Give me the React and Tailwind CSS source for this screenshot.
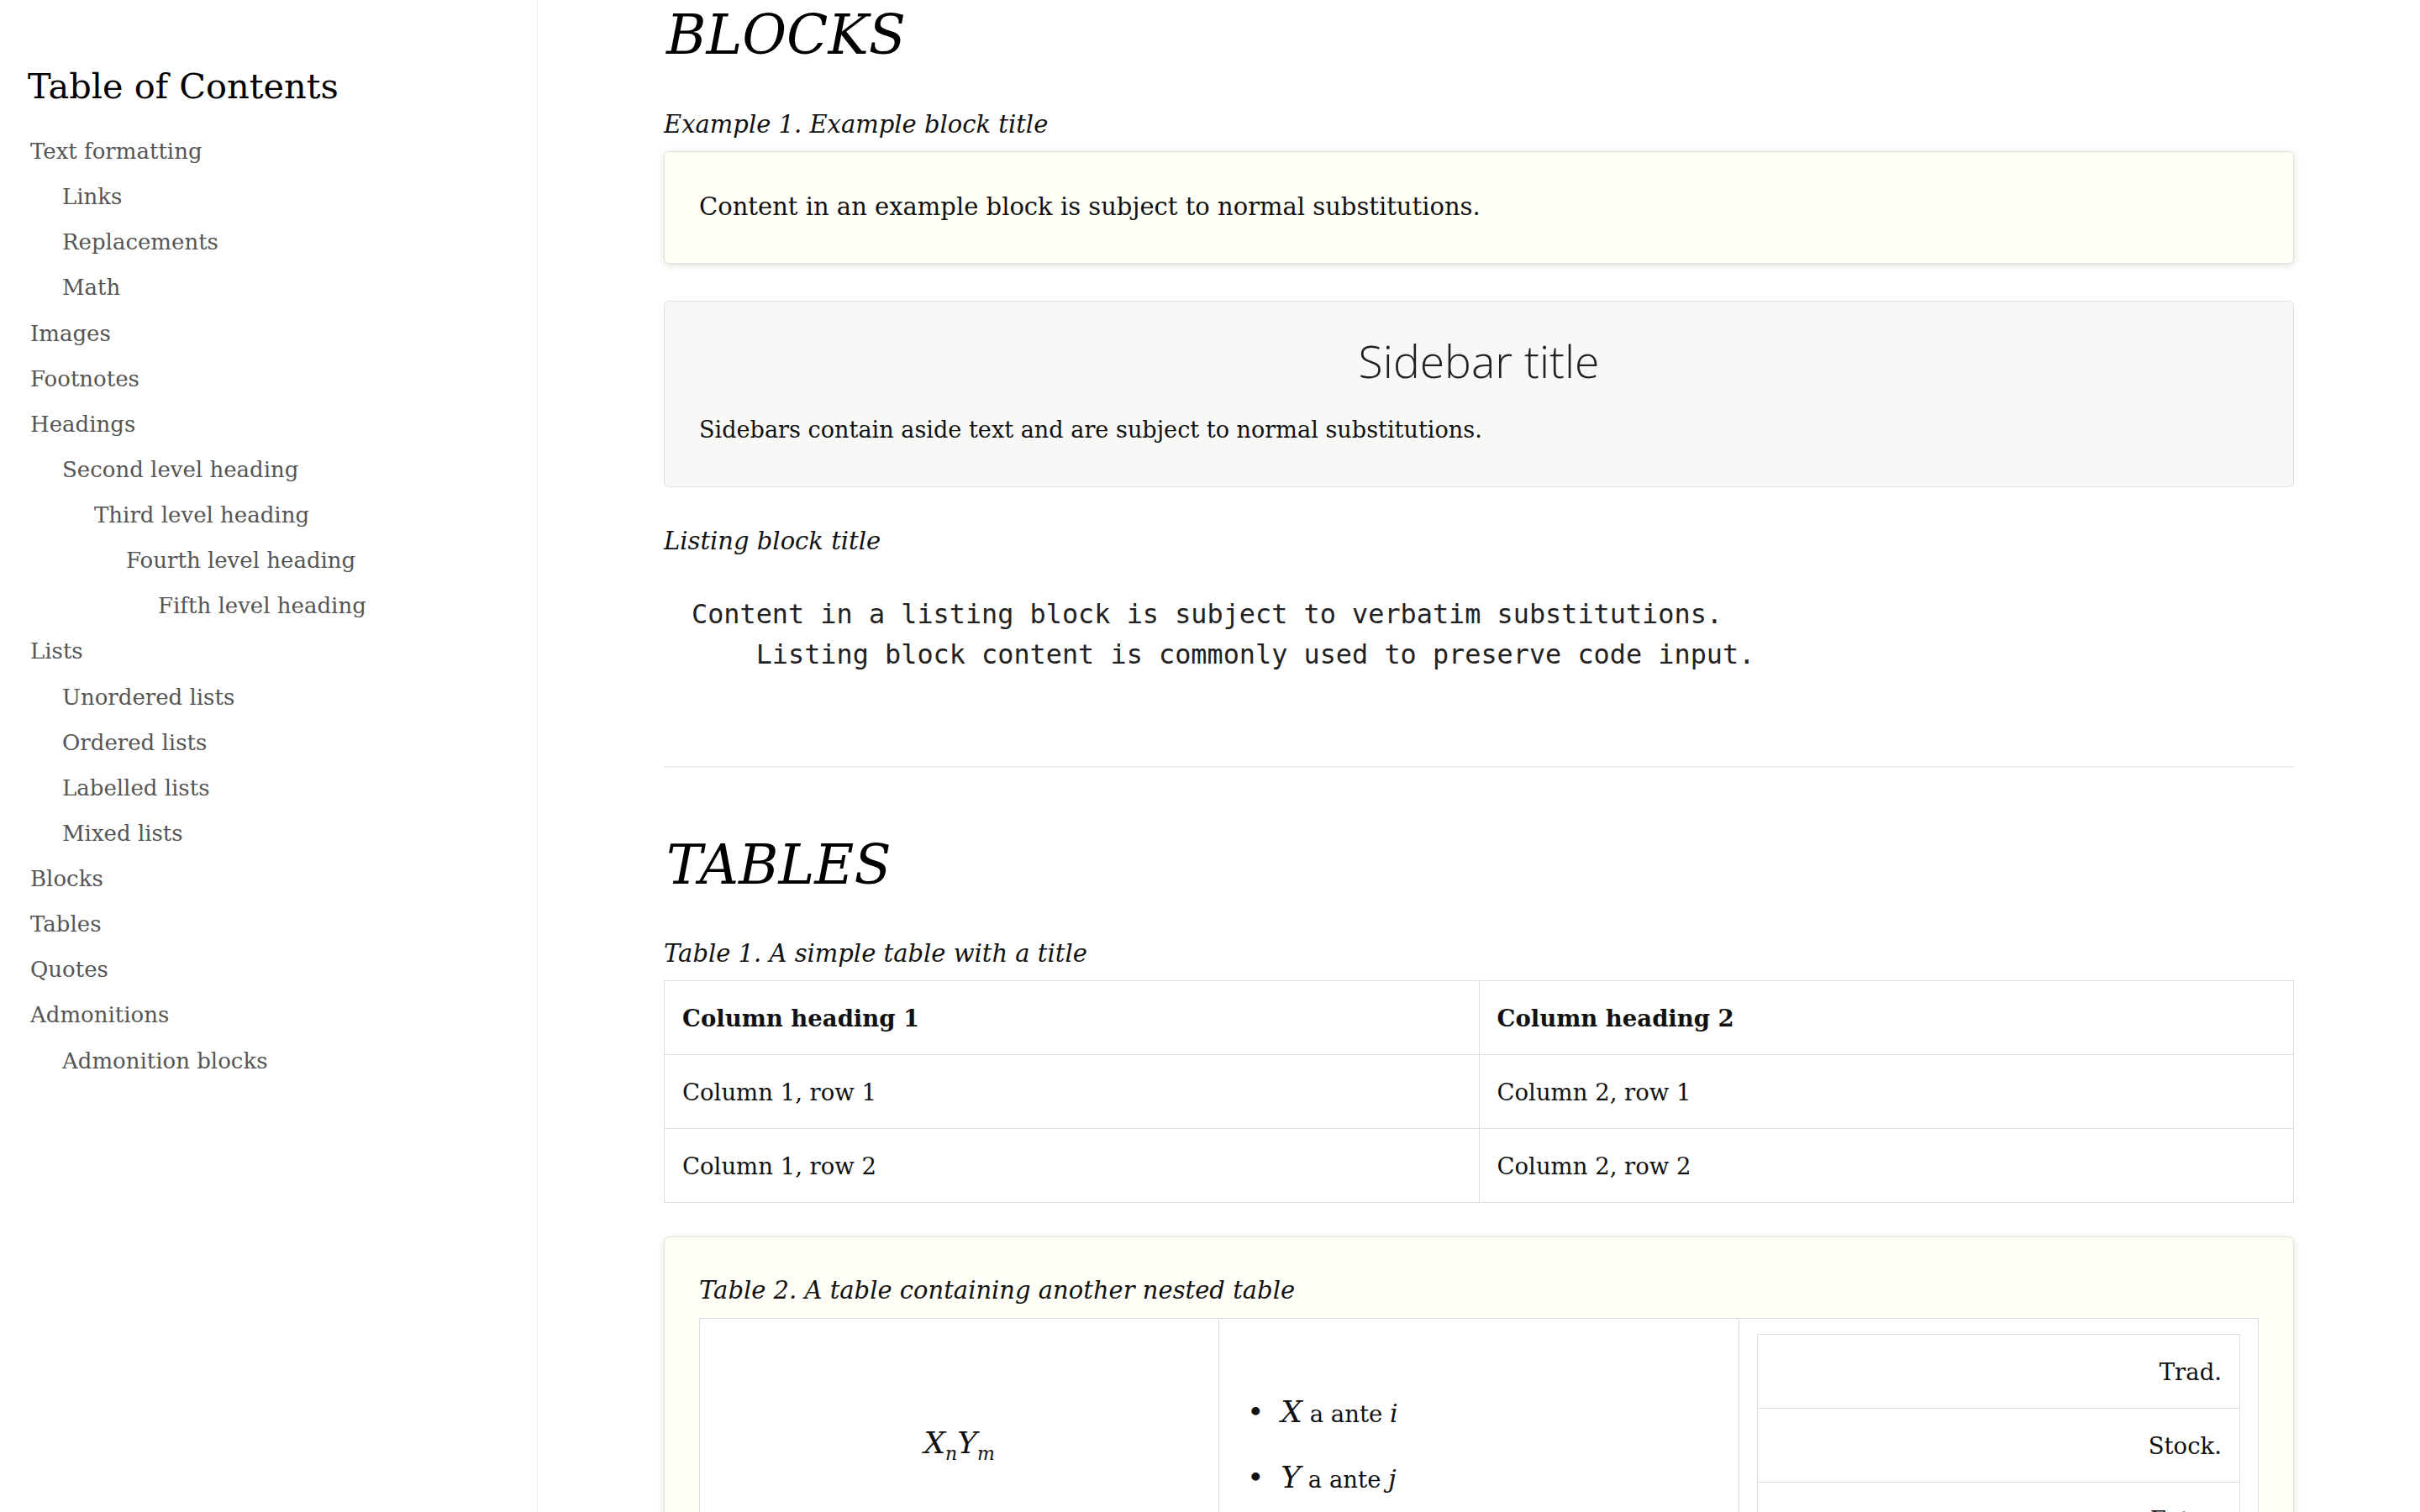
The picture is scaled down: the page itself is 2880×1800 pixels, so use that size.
import React from "react";

const toc = [
  { t: "Text formatting", c: [{ t: "Links" }, { t: "Replacements" }, { t: "Math" }] },
  { t: "Images" },
  { t: "Footnotes" },
  {
    t: "Headings",
    c: [
      {
        t: "Second level heading",
        c: [{ t: "Third level heading", c: [{ t: "Fourth level heading", c: [{ t: "Fifth level heading" }] }] }],
      },
    ],
  },
  { t: "Lists", c: [{ t: "Unordered lists" }, { t: "Ordered lists" }, { t: "Labelled lists" }, { t: "Mixed lists" }] },
  { t: "Blocks" },
  { t: "Tables" },
  { t: "Quotes" },
  { t: "Admonitions", c: [{ t: "Admonition blocks" }] },
];

function TocList({ items, nested }) {
  return (
    <ul className={nested ? "pl-[38px]" : ""}>
      {items.map((it) => (
        <li key={it.t}>
          <a className="block text-[#555555]">{it.t}</a>
          {it.c && <TocList items={it.c} nested />}
        </li>
      ))}
    </ul>
  );
}

export default function App() {
  return (
    <div className="flex h-screen overflow-hidden bg-white font-['DejaVu_Serif',serif] text-[#111111]">
      <aside className="w-[640px] shrink-0 border-r border-[#ebebeb] pl-[33px] pt-[75px]">
        <h2 className="text-[41.5px] leading-[56px] text-black">Table of Contents</h2>
        <nav className="mt-[22px] pl-[3px] text-[26px] leading-[54.12px]">
          <TocList items={toc} />
        </nav>
      </aside>

      <main className="flex-1 px-[150px] pt-[2px]">
        <h2 className="pl-[3px] italic text-[64.5px] leading-[80px] text-black">BLOCKS</h2>

        <div className="mt-[46px] italic text-[29px] leading-[40px]">Example 1. Example block title</div>
        <div className="mt-[12px] rounded-[6px] border border-[#e0e0dc] bg-[#fffef7] pb-[47px] pl-[41px] pt-[45px] text-[29px] leading-[40px] shadow-[0_2px_8px_#e0e0dc]">
          Content in an example block is subject to normal substitutions.
        </div>

        <div className="mt-[44px] rounded-[6px] border border-[#e0e0dc] bg-[#f8f8f7] px-[41px] pb-[47px] pt-[39px]">
          <div className="text-center font-['Open_Sans',sans-serif] text-[53.5px] font-light leading-[64px] text-[#222222]">
            Sidebar title
          </div>
          <p className="mt-[30px] text-[27.1px] leading-[40px]">
            Sidebars contain aside text and are subject to normal substitutions.
          </p>
        </div>

        <div className="mt-[44px] italic text-[29px] leading-[40px]">Listing block title</div>
        <pre className="mt-[43px] pl-[33px] font-['DejaVu_Sans_Mono',monospace] text-[31.85px] leading-[48px] text-[#222222]">
          {"Content in a listing block is subject to verbatim substitutions.\n    Listing block content is commonly used to preserve code input."}
        </pre>

        <div className="mt-[109px] h-[2px] bg-[#efefef]" />

        <h2 className="mt-[76px] pl-[3px] italic text-[64.5px] leading-[80px] text-black">TABLES</h2>

        <div className="mt-[45px] italic text-[29px] leading-[40px]">Table 1. A simple table with a title</div>
        <table className="mt-[12px] w-full table-fixed border-collapse text-[27.5px] leading-[40px]">
          <thead>
            <tr className="h-[88px]">
              <th className="border border-[#dedede] pl-[21px] text-left font-bold">Column heading 1</th>
              <th className="border border-[#dedede] pl-[21px] text-left font-bold">Column heading 2</th>
            </tr>
          </thead>
          <tbody>
            <tr className="h-[88px]">
              <td className="border border-[#dedede] pl-[21px]">Column 1, row 1</td>
              <td className="border border-[#dedede] pl-[21px]">Column 2, row 1</td>
            </tr>
            <tr className="h-[88px]">
              <td className="border border-[#dedede] pl-[21px]">Column 1, row 2</td>
              <td className="border border-[#dedede] pl-[21px]">Column 2, row 2</td>
            </tr>
          </tbody>
        </table>

        <div className="mt-[40px] rounded-[6px] border border-[#e0e0dc] bg-[#fffef7] px-[41px] pb-[40px] pt-[43px] shadow-[0_2px_8px_#e0e0dc]">
          <div className="italic text-[29px] leading-[40px]">Table 2. A table containing another nested table</div>
          <table className="mt-[13px] w-full table-fixed border-collapse bg-white text-[27.5px] leading-[40px]">
            <tbody>
              <tr>
                <td className="border border-[#dedede] text-center align-middle">
                  <span className="italic text-[36px]">X</span>
                  <span className="relative top-[8px] italic text-[22px]">n</span>
                  <span className="italic text-[36px]">Y</span>
                  <span className="relative top-[8px] italic text-[22px]">m</span>
                </td>
                <td className="border border-[#dedede] pl-[33px] align-middle">
                  <ul>
                    <li className="flex items-baseline">
                      <span className="w-[40px] text-[34px]">•</span>
                      <span>
                        <span className="italic text-[36px]">X</span> a ante <span className="italic text-[30px]">i</span>
                      </span>
                    </li>
                    <li className="mt-[36px] flex items-baseline">
                      <span className="w-[40px] text-[34px]">•</span>
                      <span>
                        <span className="italic text-[36px]">Y</span> a ante <span className="italic text-[30px]">j</span>
                      </span>
                    </li>
                  </ul>
                </td>
                <td className="border border-[#dedede] px-[21px] py-[18px] align-middle">
                  <table className="w-full border-collapse">
                    <tbody>
                      <tr className="h-[88px]">
                        <td className="border border-[#dedede] pr-[21px] text-right">Trad.</td>
                      </tr>
                      <tr className="h-[88px]">
                        <td className="border border-[#dedede] pr-[21px] text-right">Stock.</td>
                      </tr>
                      <tr className="h-[88px]">
                        <td className="border border-[#dedede] pr-[21px] text-right">Extra.</td>
                      </tr>
                    </tbody>
                  </table>
                </td>
              </tr>
            </tbody>
          </table>
        </div>
      </main>
    </div>
  );
}
